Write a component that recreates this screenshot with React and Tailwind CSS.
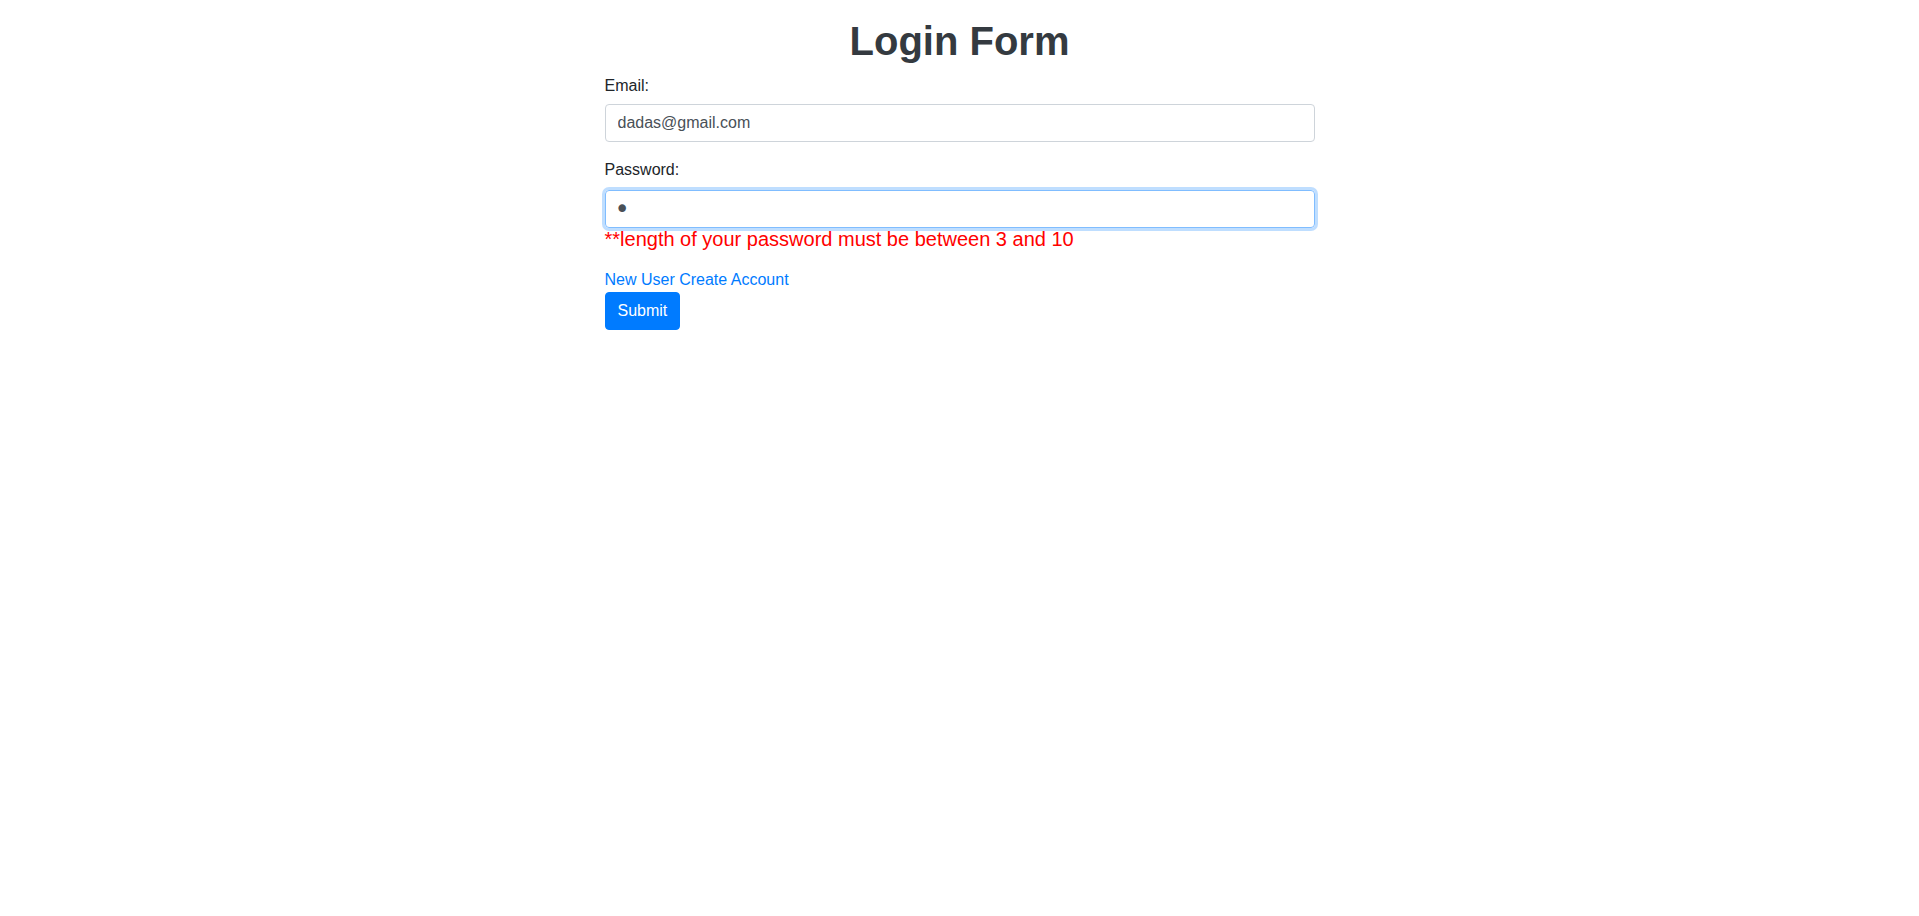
import React, { useState } from 'react';

export default function App() {
  const [email, setEmail] = useState('dadas@gmail.com');
  const [password, setPassword] = useState('a');

  return (
    <div className="min-h-screen bg-white text-[#212529] font-['Liberation_Sans',Arial,sans-serif] text-base leading-6">
      <h1 className="pt-[17px] mb-[9px] text-center text-[40px] leading-[48px] font-bold text-[#343a40]">
        Login Form
      </h1>

      <form className="w-[710px] mx-auto" onSubmit={(e) => e.preventDefault()}>
        <div className="mb-4">
          <label className="inline-block mb-[6px]">Email:</label>
          <input
            type="email"
            value={email}
            onChange={(e) => setEmail(e.target.value)}
            className="block w-full h-[38px] px-3 border border-[#ced4da] rounded-[4px] text-[#495057] outline-none"
          />
        </div>

        <div>
          <label className="inline-block mb-2">Password:</label>
          <input
            type="password"
            value={password}
            onChange={(e) => setPassword(e.target.value)}
            className="block w-full h-[38px] pl-[9px] pr-3 border border-[#80bdff] rounded-[4px] text-[#495057] font-['DejaVu_Sans',sans-serif] text-[26px] outline-none shadow-[0_0_0_3px_rgba(0,123,255,0.25)]"
          />
          <p className="text-[20px] leading-[23px] text-[#ff0000]">
            **length of your password must be between 3 and 10
          </p>
        </div>

        <a href="#" className="block mt-[17px] w-fit text-[#007bff]">
          New User Create Account
        </a>
        <button
          type="submit"
          className="h-[38px] px-3 border border-[#007bff] rounded-[4px] bg-[#007bff] text-white"
        >
          Submit
        </button>
      </form>
    </div>
  );
}
